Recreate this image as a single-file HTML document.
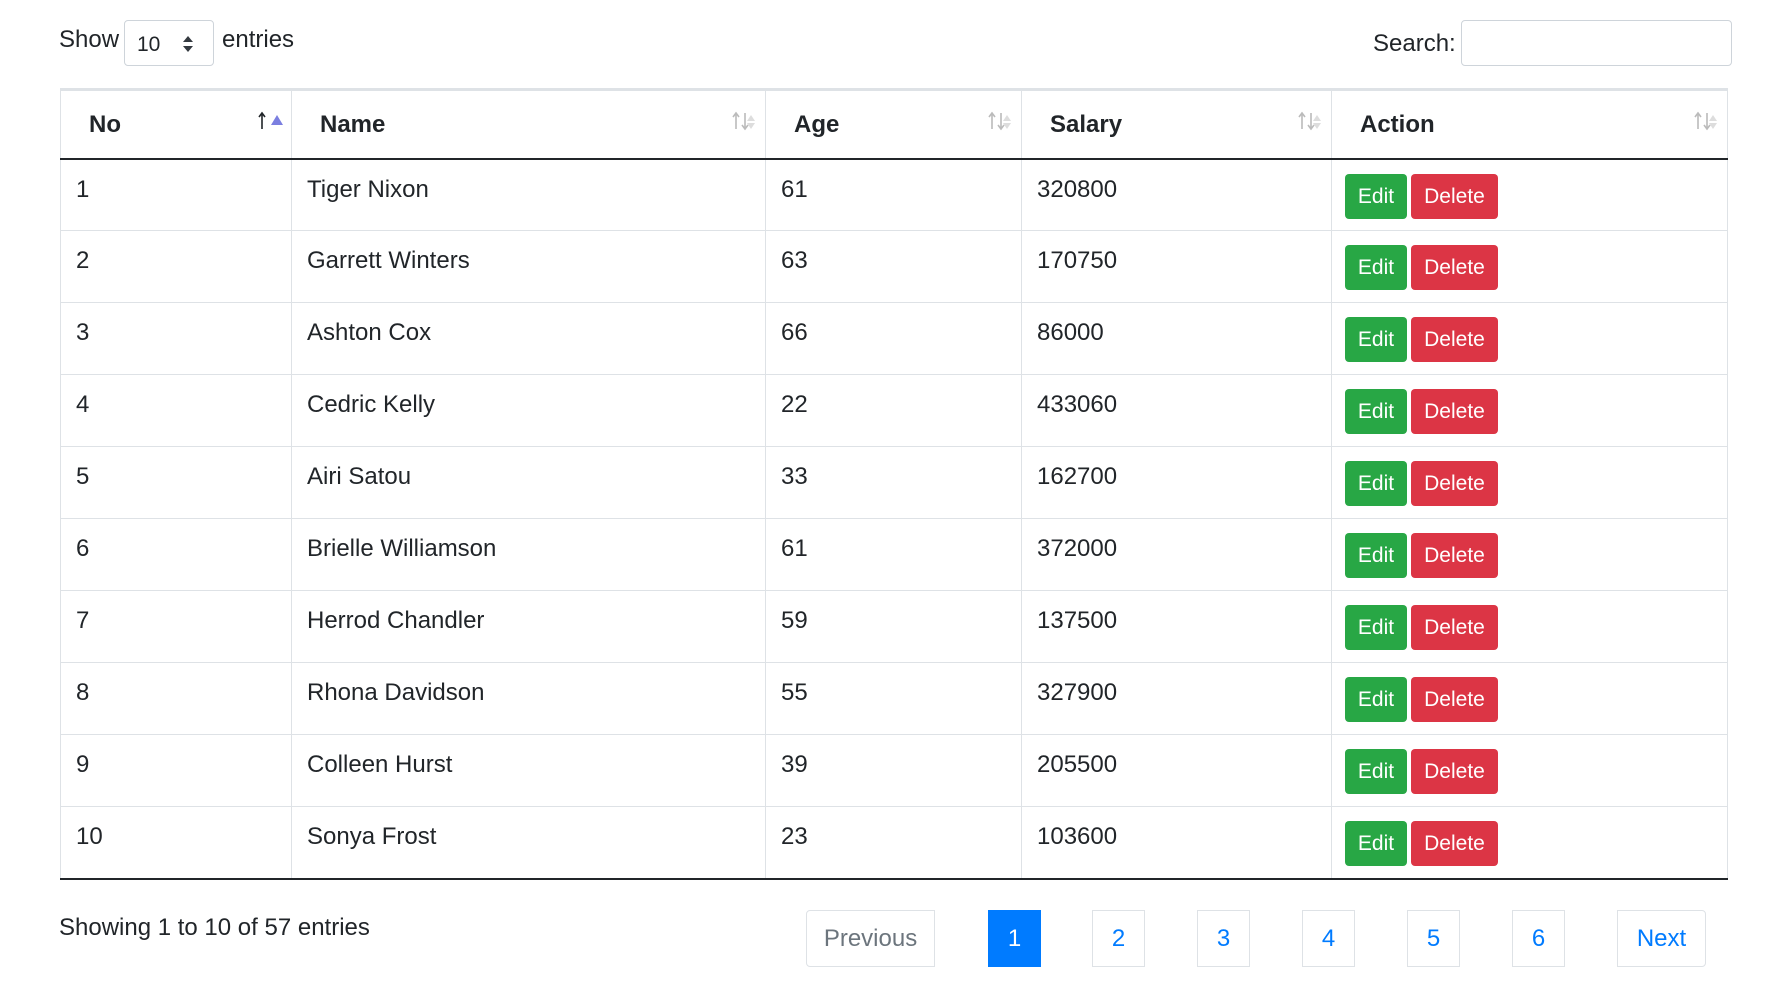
<!DOCTYPE html>
<html><head><meta charset="utf-8"><style>
*{box-sizing:border-box;margin:0;padding:0}
body{width:1790px;height:1007px;background:#fff;font-family:"Liberation Sans",sans-serif;color:#212529;font-size:24px;position:relative;overflow:hidden}
.abs{position:absolute}
table{position:absolute;left:60px;top:88px;border-collapse:collapse;table-layout:fixed;width:1667px}
th,td{border:1px solid #dee2e6;text-align:left;vertical-align:top}
th{height:69px;font-weight:bold;padding:20px 16px 0 28px;position:relative;border-top:3px solid #dee2e6;border-bottom:2px solid #212529}
td{height:72px;padding:18px 16px 0 15px;line-height:24px}
tbody tr:last-child td{border-bottom:2px solid #212529}
.si{position:absolute;right:8px;top:20px;width:26px;height:20px}
.btn{display:inline-block;color:#fff;font-size:21px;height:45px;line-height:45px;border-radius:4px;text-align:center;margin-top:-4px;vertical-align:top}
.e{background:#28a745;width:62px;margin-left:-2px}
.d{background:#dc3545;width:87px;margin-left:4px}
.pg{position:absolute;top:910px;height:57px;border:1px solid #dee2e6;color:#007bff;font-size:24px;line-height:55px;text-align:center}
</style></head><body>
<div class="abs" style="left:59px;top:26px;">Show</div>
<div class="abs" style="left:124px;top:20px;width:90px;height:46px;border:1px solid #ced4da;border-radius:4px;">
<span class="abs" style="left:12px;top:12px;font-size:21px">10</span>
<svg class="abs" style="left:57px;top:14px" width="12" height="18"><path d="M1 7L6 1L11 7Z M1 11L6 17L11 11Z" fill="#343a40"/></svg></div>
<div class="abs" style="left:222px;top:26px;">entries</div>
<div class="abs" style="left:1373px;top:30px;">Search:</div>
<div class="abs" style="left:1461px;top:20px;width:271px;height:46px;border:1px solid #ced4da;border-radius:4px;"></div>
<table>
<colgroup><col style="width:231px"><col style="width:474px"><col style="width:256px"><col style="width:310px"><col style="width:396px"></colgroup>
<thead><tr>
<th>No<svg class="si" viewBox="0 0 26 20"><path d="M5 18V3M2 6L5 2L8 6" stroke="#212529" stroke-width="1.6" fill="none"/><path d="M14 14L20 4L26 14Z" fill="#7b7fe0"/></svg></th>
<th>Name<svg class="si" viewBox="0 0 26 20"><path d="M5 18V3M2 6L5 2L8 6M14 2V17M11 14L14 18L17 14" stroke="#bbb" stroke-width="1.6" fill="none"/><path d="M16 10L20 4L24 10ZM16 12L20 18L24 12Z" fill="#ddd"/></svg></th>
<th>Age<svg class="si" viewBox="0 0 26 20"><path d="M5 18V3M2 6L5 2L8 6M14 2V17M11 14L14 18L17 14" stroke="#bbb" stroke-width="1.6" fill="none"/><path d="M16 10L20 4L24 10ZM16 12L20 18L24 12Z" fill="#ddd"/></svg></th>
<th>Salary<svg class="si" viewBox="0 0 26 20"><path d="M5 18V3M2 6L5 2L8 6M14 2V17M11 14L14 18L17 14" stroke="#bbb" stroke-width="1.6" fill="none"/><path d="M16 10L20 4L24 10ZM16 12L20 18L24 12Z" fill="#ddd"/></svg></th>
<th>Action<svg class="si" viewBox="0 0 26 20"><path d="M5 18V3M2 6L5 2L8 6M14 2V17M11 14L14 18L17 14" stroke="#bbb" stroke-width="1.6" fill="none"/><path d="M16 10L20 4L24 10ZM16 12L20 18L24 12Z" fill="#ddd"/></svg></th>
</tr></thead>
<tbody>
<tr><td>1</td><td>Tiger Nixon</td><td>61</td><td>320800</td><td><span class="btn e">Edit</span><span class="btn d">Delete</span></td></tr>
<tr><td>2</td><td>Garrett Winters</td><td>63</td><td>170750</td><td><span class="btn e">Edit</span><span class="btn d">Delete</span></td></tr>
<tr><td>3</td><td>Ashton Cox</td><td>66</td><td>86000</td><td><span class="btn e">Edit</span><span class="btn d">Delete</span></td></tr>
<tr><td>4</td><td>Cedric Kelly</td><td>22</td><td>433060</td><td><span class="btn e">Edit</span><span class="btn d">Delete</span></td></tr>
<tr><td>5</td><td>Airi Satou</td><td>33</td><td>162700</td><td><span class="btn e">Edit</span><span class="btn d">Delete</span></td></tr>
<tr><td>6</td><td>Brielle Williamson</td><td>61</td><td>372000</td><td><span class="btn e">Edit</span><span class="btn d">Delete</span></td></tr>
<tr><td>7</td><td>Herrod Chandler</td><td>59</td><td>137500</td><td><span class="btn e">Edit</span><span class="btn d">Delete</span></td></tr>
<tr><td>8</td><td>Rhona Davidson</td><td>55</td><td>327900</td><td><span class="btn e">Edit</span><span class="btn d">Delete</span></td></tr>
<tr><td>9</td><td>Colleen Hurst</td><td>39</td><td>205500</td><td><span class="btn e">Edit</span><span class="btn d">Delete</span></td></tr>
<tr><td>10</td><td>Sonya Frost</td><td>23</td><td>103600</td><td><span class="btn e">Edit</span><span class="btn d">Delete</span></td></tr>
</tbody></table>
<div class="abs" style="left:59px;top:914px;">Showing 1 to 10 of 57 entries</div>
<div class="pg" style="left:806px;width:129px;color:#6c757d;border-radius:4px 0 0 4px">Previous</div>
<div class="pg" style="left:988px;width:53px;background:#007bff;border-color:#007bff;color:#fff">1</div>
<div class="pg" style="left:1092px;width:53px">2</div>
<div class="pg" style="left:1197px;width:53px">3</div>
<div class="pg" style="left:1302px;width:53px">4</div>
<div class="pg" style="left:1407px;width:53px">5</div>
<div class="pg" style="left:1512px;width:53px">6</div>
<div class="pg" style="left:1617px;width:89px;border-radius:0 4px 4px 0">Next</div>
</body></html>
